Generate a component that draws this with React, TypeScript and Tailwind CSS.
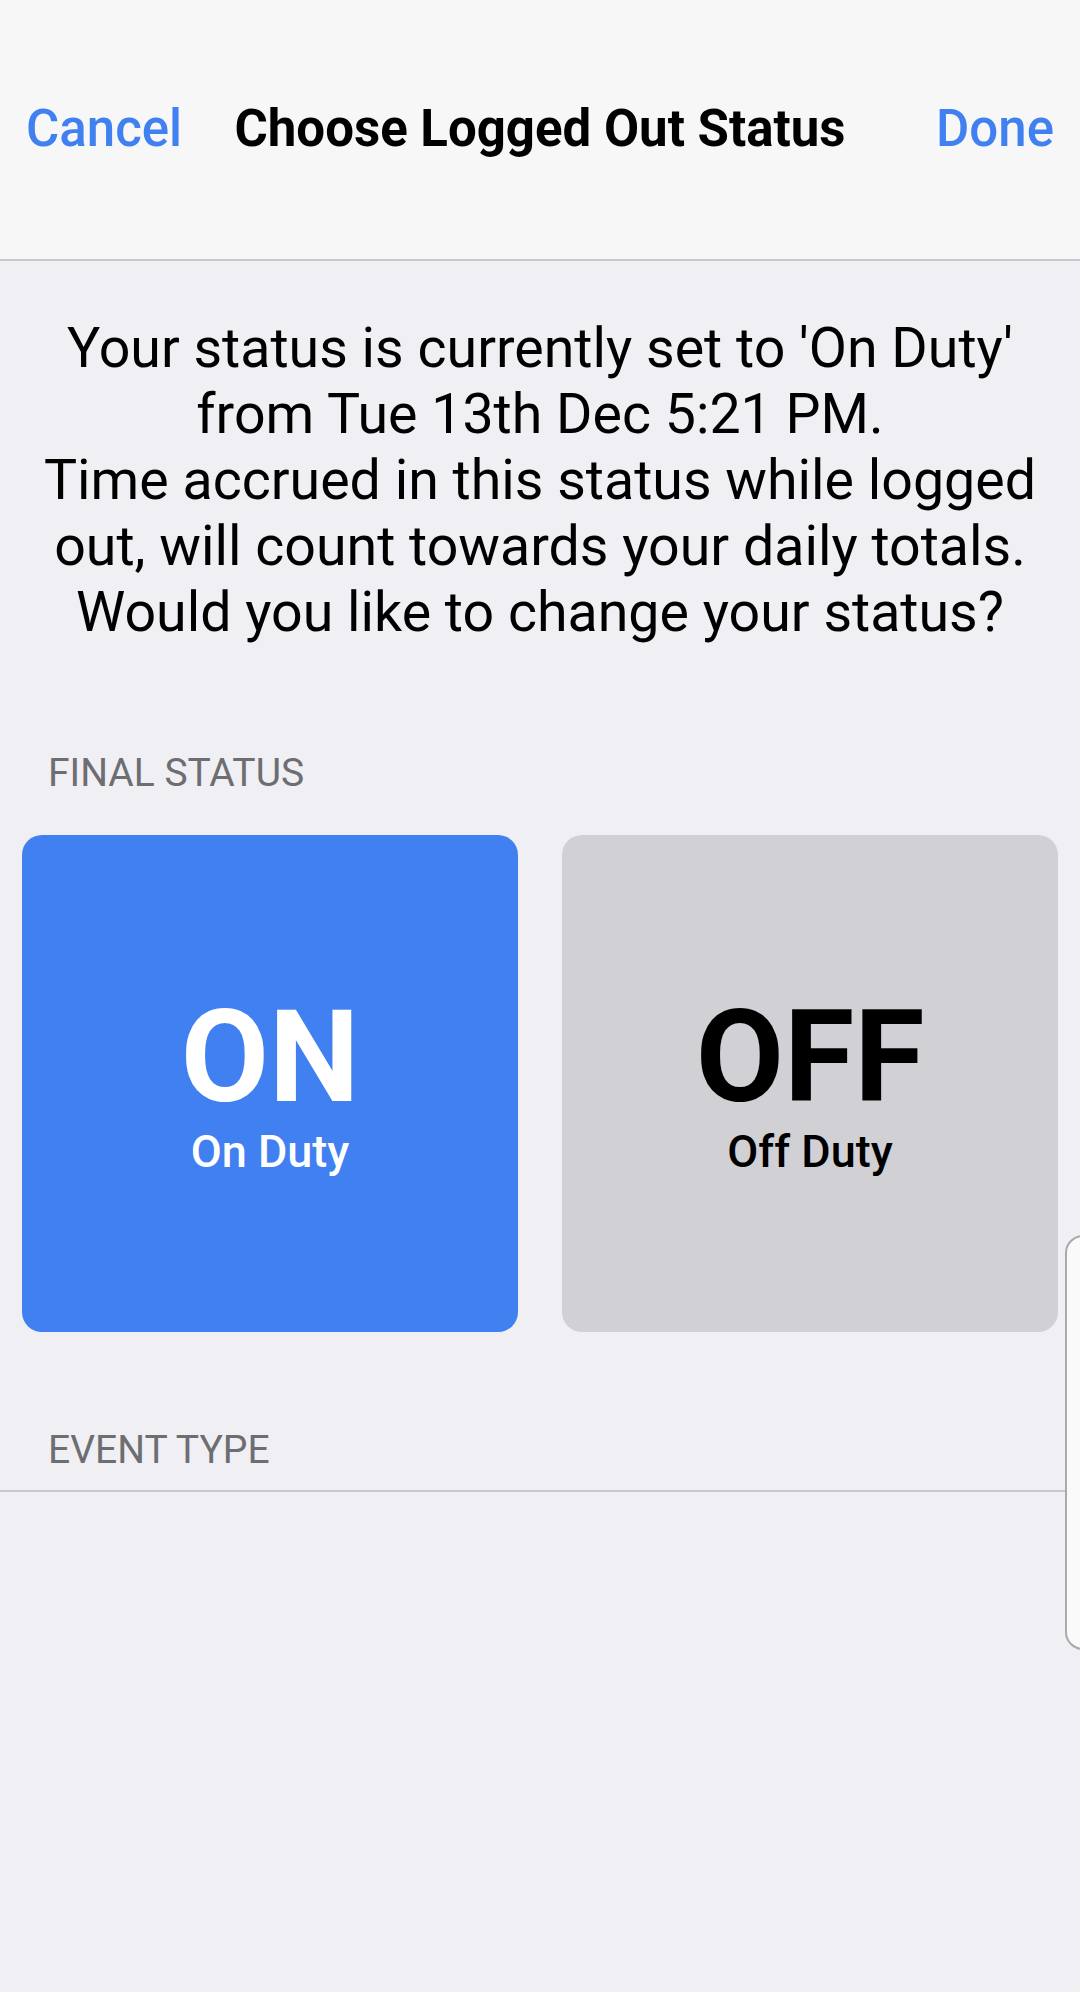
export default function App() {
  return (
    <div
      className="relative w-[1080px] h-[1992px] overflow-hidden bg-[#efeff4]"
      style={{ fontFamily: "Roboto, 'Noto Sans', sans-serif" }}
    >
      {/* Navigation bar */}
      <header className="h-[261px] bg-[#f7f7f7] border-b-2 border-[#c8c8cc] grid grid-cols-[1fr_auto_1fr] items-center pl-[26px] pr-[26px] pb-[2px]">
        <button className="justify-self-start text-[51px] font-medium text-[#4080f0] leading-none">Cancel</button>
        <h1 className="text-[51px] font-bold text-black leading-none">Choose Logged Out Status</h1>
        <button className="justify-self-end text-[51px] font-medium text-[#4080f0] leading-none">Done</button>
      </header>

      {/* Explanation */}
      <p className="pt-[55px] px-[10px] text-center text-[55.5px] leading-[66px] text-black">
        Your status is currently set to 'On Duty'
        <br />
        from Tue 13th Dec 5:21 PM.
        <br />
        Time accrued in this status while logged
        <br />
        out, will count towards your daily totals.
        <br />
        Would you like to change your status?
      </p>

      {/* Final status */}
      <div className="mt-[105px] pl-[48px] text-[39px] leading-[44px] text-[#6d6d72]">FINAL STATUS</div>

      <div className="mt-[40px] px-[22px] grid grid-cols-2 gap-[44px]">
        <button className="h-[497px] rounded-[20px] bg-[#4080f0] flex flex-col items-center justify-center pt-[2px] text-white">
          <span className="text-[128px] font-bold leading-[128px]">ON</span>
          <span className="mt-[6px] text-[45px] font-medium leading-[50px]">On Duty</span>
        </button>
        <button className="h-[497px] rounded-[20px] bg-[#d1d0d5] flex flex-col items-center justify-center pt-[2px] text-black">
          <span className="text-[128px] font-bold leading-[128px]">OFF</span>
          <span className="mt-[6px] text-[45px] font-medium leading-[50px]">Off Duty</span>
        </button>
      </div>

      {/* Event type */}
      <div className="mt-[96px] pl-[48px] text-[39px] leading-[44px] text-[#6d6d72]">EVENT TYPE</div>
      <div className="mt-[18px] h-[2px] bg-[#c8c7cc]" />

      {/* Edge panel handle */}
      <div className="absolute left-[1065px] top-[1235px] w-[40px] h-[415px] rounded-[18px] border-2 border-[#a9a9ae] bg-[#fafafb]" />
    </div>
  );
}
